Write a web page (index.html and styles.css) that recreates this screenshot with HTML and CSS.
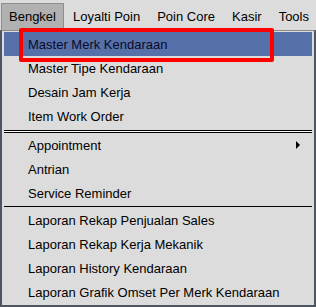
FILE: index.html
```html
<!DOCTYPE html>
<html>
<head lang="id">
    <meta charset="UTF-8">
    <title>Menu Bengkel</title>
    <link rel="stylesheet" href="styles.css">
</head>
<body>
<div class="menubar">
    <div class="menubar-item active">Bengkel</div>
    <div class="menubar-item">Loyalti Poin</div>
    <div class="menubar-item">Poin Core</div>
    <div class="menubar-item">Kasir</div>
    <div class="menubar-item">Tools</div>
</div>
<div class="dropdown">
    <div class="menu-row selected">Master Merk Kendaraan</div>
    <div class="menu-row">Master Tipe Kendaraan</div>
    <div class="menu-row">Desain Jam Kerja</div>
    <div class="menu-row">Item Work Order</div>
    <div class="sep-double"></div>
    <div class="menu-row has-sub">Appointment<span class="sub-arrow"></span></div>
    <div class="menu-row">Antrian</div>
    <div class="menu-row">Service Reminder</div>
    <div class="sep-single"></div>
    <div class="menu-row">Laporan Rekap Penjualan Sales</div>
    <div class="menu-row">Laporan Rekap Kerja Mekanik</div>
    <div class="menu-row">Laporan History Kendaraan</div>
    <div class="menu-row">Laporan Grafik Omset Per Merk Kendaraan</div>
    <div class="mark"></div>
</div>
</body>
</html>
```

FILE: styles.css
```css
html, body {
    margin: 0px;
    padding: 0px;
}
body {
    width: 316px;
    height: 307px;
    overflow: hidden;
    background: #dcdcdc;
    font-family: "Liberation Sans", Arial, sans-serif;
    font-size: 13px;
    color: #000000;
}
.menubar {
    display: flex;
    height: 30px;
    padding: 3px 0px 0px 1px;
    box-sizing: border-box;
    background: #dcdcdc;
}
.menubar-item {
    padding: 0px 7px;
    margin-left: 1px;
    line-height: 26px;
    height: 27px;
    box-sizing: border-box;
    border: 1px solid transparent;
    white-space: nowrap;
}
.menubar-item.active {
    margin-left: 0px;
    background: #b1b1b1;
    border-color: #8e8e8e;
    border-bottom: none;
}
.dropdown {
    position: relative;
    height: 277px;
    box-sizing: border-box;
    border: 2px solid #4d5462;
    border-top: 1px solid #8a8a8a;
    padding: 1px 2px;
    background: #dcdcdc;
}
.menu-row {
    position: relative;
    height: 24px;
    line-height: 26px;
    padding-left: 24px;
    white-space: nowrap;
}
.menu-row.selected {
    background: #5671a9;
    color: #0a0a28;
}
.sub-arrow {
    position: absolute;
    right: 12px;
    top: 8px;
    width: 0px;
    height: 0px;
    border-top: 4px solid transparent;
    border-bottom: 4px solid transparent;
    border-left: 4px solid #000000;
}
.sep-double {
    height: 5px;
    box-sizing: border-box;
    padding-top: 2px;
}
.sep-double::before {
    content: "";
    display: block;
    height: 1px;
    border-top: 1px solid #000000;
    border-bottom: 1px solid #000000;
    background: #ffffff;
}
.sep-single {
    height: 3px;
    box-sizing: border-box;
    padding-top: 1px;
}
.sep-single::before {
    content: "";
    display: block;
    height: 1px;
    background: #000000;
}
.mark {
    position: absolute;
    left: 17px;
    top: -3px;
    width: 255px;
    height: 34px;
    box-sizing: border-box;
    border: 4px solid #ff0000;
    border-radius: 2px;
}
```
